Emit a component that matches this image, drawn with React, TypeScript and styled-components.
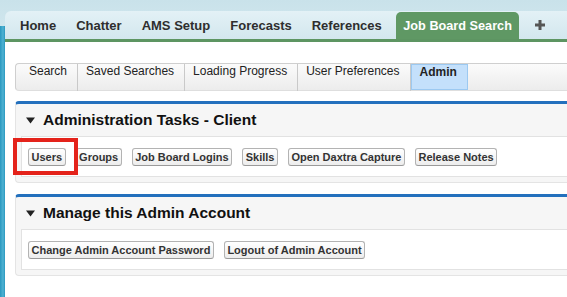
import React from 'react';
import styled, { createGlobalStyle } from 'styled-components';

const GlobalStyle = createGlobalStyle`
  html, body {
    margin: 0;
    padding: 0;
    width: 567px;
    height: 297px;
    overflow: hidden;
    font-family: "Liberation Sans", Arial, Helvetica, sans-serif;
  }
`;

const Page = styled.div`
  display: flex;
  width: 567px;
  height: 297px;
  overflow: hidden;
  background: linear-gradient(#c9e2ea, #d3e8ef 40px);
`;

const SideStrip = styled.div`
  flex: 0 0 5px;
  margin-top: 26px;
  background: linear-gradient(to right, #2a97bf, #4fb2d2 60%, #2a97bf);
`;

const Main = styled.div`
  flex: 1;
  min-width: 0;
  display: flex;
  flex-direction: column;
  padding-top: 11px;
`;

const TabBar = styled.div`
  display: flex;
  align-items: flex-end;
  height: 28px;
  padding-left: 5px;
  border-radius: 6px 0 0 0;
  border-bottom: 3px solid #5d9562;
  background: linear-gradient(#e3f1f6, #d3e7ee);
`;

const Tab = styled.div<{ $active?: boolean }>`
  display: flex;
  align-items: center;
  height: ${(p) => (p.$active ? '27px' : '28px')};
  padding: 0 ${(p) => (p.$active ? '7.5px' : '10px')};
  margin-left: ${(p) => (p.$active ? '4px' : '0')};
  border-radius: ${(p) => (p.$active ? '5px 5px 0 0' : '0')};
  background: ${(p) => (p.$active ? '#5f9864' : 'transparent')};
  color: ${(p) => (p.$active ? '#fff' : '#2e2e2e')};
  font-size: ${(p) => (p.$active ? '12.7px' : '13px')};
  font-weight: bold;
  white-space: nowrap;
`;

const PlusTab = styled.div`
  display: flex;
  align-items: center;
  height: 28px;
  padding-left: 16px;
`;

const Body = styled.div`
  flex: 1;
  background: #fff;
  padding: 21px 0 0 10px;
`;

const SubTabBar = styled.div`
  display: flex;
  height: 26px;
  padding-left: 5px;
  border: 1px solid #cfcfcf;
  border-right: none;
  border-bottom-color: #dedede;
  border-radius: 4px 0 0 4px;
  background: linear-gradient(#fbfbfb, #ececec);
  margin-bottom: 10px;
`;

const SubTab = styled.div<{ $active?: boolean }>`
  padding: 0 10px 0 8px;
  line-height: 15px;
  font-size: 12px;
  white-space: nowrap;
  color: #222;
  font-weight: ${(p) => (p.$active ? 'bold' : 'normal')};
  background: ${(p) => (p.$active ? '#c4e0fb' : 'transparent')};
  border: ${(p) => (p.$active ? '1px solid #9cc9f1' : 'none')};
  border-right: 1px solid ${(p) => (p.$active ? '#9cc9f1' : '#c9c9c9')};
  height: ${(p) => (p.$active ? '24px' : '27px')};
`;

const Panel = styled.section`
  border: 1px solid #e4e4e4;
  border-top: 3px solid #2370bd;
  border-right: none;
  border-radius: 4px 0 0 4px;
  background: #f6f6f6;
  padding: 0 0 5px 5px;
  margin-bottom: 11px;
`;

const PanelHeader = styled.div`
  display: flex;
  align-items: center;
  gap: 8px;
  height: 32px;
  padding-left: 5px;
  font-size: 15.5px;
  font-weight: bold;
  color: #111;
  white-space: nowrap;
`;

const PanelContent = styled.div`
  position: relative;
  display: flex;
  gap: 10px;
  background: #fff;
  border: 1px solid #e2e2e2;
  border-right: none;
  padding: 11px 7px 10px 6px;
`;

const ActionButton = styled.button`
  height: 18px;
  padding: 0 2.5px;
  margin: 0;
  border: 1px solid #b3b3b3;
  border-bottom-color: #9a9a9a;
  border-radius: 3px;
  background: linear-gradient(#ffffff, #ededed);
  font-family: "Liberation Sans", Arial, Helvetica, sans-serif;
  font-size: 11px;
  font-weight: bold;
  color: #333;
  white-space: nowrap;
`;

const Highlight = styled.div`
  position: absolute;
  left: -9px;
  top: 1px;
  width: 65px;
  height: 37px;
  box-sizing: border-box;
  border: 4px solid #e4231b;
  pointer-events: none;
`;

const Caret = () => (
  <svg width="9" height="7" viewBox="0 0 9 7">
    <polygon points="0,0.5 9,0.5 4.5,6.5" fill="#222" />
  </svg>
);

const PlusIcon = () => (
  <svg width="10" height="10" viewBox="0 0 10 10">
    <rect x="3.5" y="0" width="3" height="10" fill="#555" />
    <rect x="0" y="3.5" width="10" height="3" fill="#555" />
  </svg>
);

const mainTabs = ['Home', 'Chatter', 'AMS Setup', 'Forecasts', 'References'];
const subTabs = ['Search', 'Saved Searches', 'Loading Progress', 'User Preferences'];
const clientTasks = ['Users', 'Groups', 'Job Board Logins', 'Skills', 'Open Daxtra Capture', 'Release Notes'];
const accountTasks = ['Change Admin Account Password', 'Logout of Admin Account'];

const App = () => {
  return (
    <>
      <GlobalStyle />
      <Page>
        <SideStrip />
        <Main>
          <TabBar>
            {mainTabs.map((t) => (
              <Tab key={t}>{t}</Tab>
            ))}
            <Tab $active>Job Board Search</Tab>
            <PlusTab>
              <PlusIcon />
            </PlusTab>
          </TabBar>
          <Body>
            <SubTabBar>
              {subTabs.map((t) => (
                <SubTab key={t}>{t}</SubTab>
              ))}
              <SubTab $active>Admin</SubTab>
            </SubTabBar>

            <Panel>
              <PanelHeader>
                <Caret />
                Administration Tasks - Client
              </PanelHeader>
              <PanelContent>
                {clientTasks.map((t) => (
                  <ActionButton key={t}>{t}</ActionButton>
                ))}
                <Highlight />
              </PanelContent>
            </Panel>

            <Panel>
              <PanelHeader>
                <Caret />
                Manage this Admin Account
              </PanelHeader>
              <PanelContent>
                {accountTasks.map((t) => (
                  <ActionButton key={t}>{t}</ActionButton>
                ))}
              </PanelContent>
            </Panel>
          </Body>
        </Main>
      </Page>
    </>
  );
};

export default App;
